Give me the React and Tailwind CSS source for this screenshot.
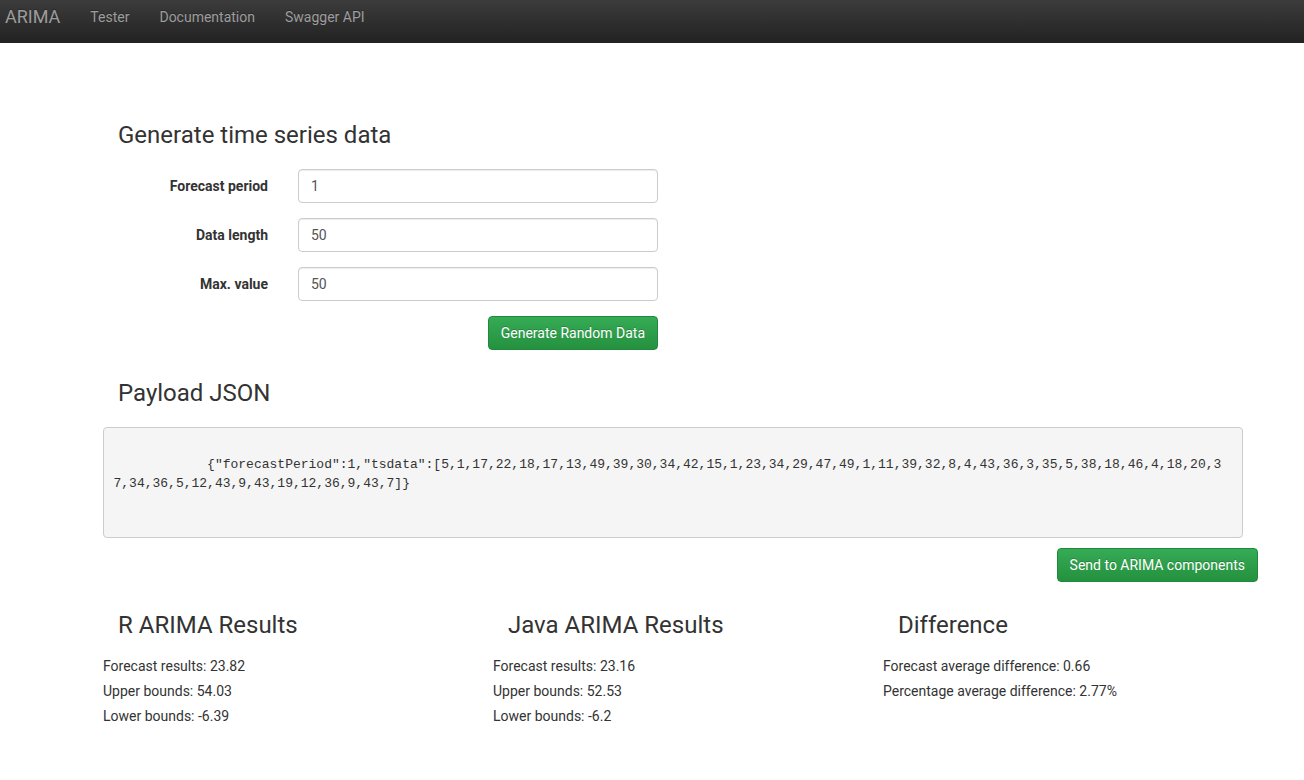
import React from "react";

const payloadLine1 =
  '{"forecastPeriod":1,"tsdata":[5,1,17,22,18,17,13,49,39,30,34,42,15,1,23,34,29,47,49,1,11,39,32,8,4,43,36,3,35,5,38,18,46,4,18,20,3';
const payloadLine2 = "7,34,36,5,12,43,9,43,19,12,36,9,43,7]}";

const fields = [
  { label: "Forecast period", value: "1" },
  { label: "Data length", value: "50" },
  { label: "Max. value", value: "50" },
];

const results = [
  {
    title: "R ARIMA Results",
    lines: ["Forecast results: 23.82", "Upper bounds: 54.03", "Lower bounds: -6.39"],
  },
  {
    title: "Java ARIMA Results",
    lines: ["Forecast results: 23.16", "Upper bounds: 52.53", "Lower bounds: -6.2"],
  },
  {
    title: "Difference",
    lines: ["Forecast average difference: 0.66", "Percentage average difference: 2.77%"],
  },
];

function Heading({ children }) {
  return (
    <h3 className="pl-[15px] text-[24px] leading-[26.4px] font-normal text-[#333]">{children}</h3>
  );
}

function GreenButton({ children }) {
  return (
    <button className="h-[34px] px-[12px] rounded-[4px] border border-[#1f8a3c] bg-gradient-to-b from-[#36ab55] to-[#24913f] text-white text-[14px] leading-[20px] [text-shadow:0_-1px_0_rgba(0,0,0,0.2)]">
      {children}
    </button>
  );
}

export default function App() {
  return (
    <div className="min-h-screen bg-white text-[#333] text-[14px] font-['Roboto',_'Liberation_Sans',_sans-serif]">
      {/* navbar */}
      <nav className="h-[43px] bg-gradient-to-b from-[#3c3c3c] to-[#222] flex items-start pt-[7px] text-[#9d9d9d] [text-shadow:0_-1px_0_rgba(0,0,0,0.25)]">
        <span className="pl-[5px] pr-[15px] text-[18px] leading-[20px]">ARIMA</span>
        <span className="px-[15px] leading-[20px]">Tester</span>
        <span className="px-[15px] leading-[20px]">Documentation</span>
        <span className="px-[15px] leading-[20px]">Swagger API</span>
      </nav>

      <div className="ml-[88px] w-[1170px] px-[15px] pt-[79px]">
        <Heading>Generate time series data</Heading>

        <div className="mt-[20.6px] flex flex-col gap-[15px]">
          {fields.map((f) => (
            <div key={f.label} className="flex items-center">
              <label className="w-[165px] text-right font-bold">{f.label}</label>
              <input
                className="ml-[30px] w-[360px] h-[34px] px-[12px] border border-[#ccc] rounded-[4px] text-[#555] text-[14px] shadow-[inset_0_1px_1px_rgba(0,0,0,0.075)] outline-none"
                defaultValue={f.value}
              />
            </div>
          ))}
          <div className="w-[555px] flex justify-end">
            <GreenButton>Generate Random Data</GreenButton>
          </div>
        </div>

        <div className="mt-[30px]">
          <Heading>Payload JSON</Heading>
        </div>

        <pre className="mt-[20.6px] h-[111px] p-[9.5px] bg-[#f5f5f5] border border-[#ccc] rounded-[4px] text-[13px] leading-[18.57px] text-[#333] whitespace-pre overflow-hidden font-['Liberation_Mono',_monospace]">
          {"\n            " + payloadLine1 + "\n" + payloadLine2}
        </pre>

        <div className="mt-[10px] -mr-[15px] flex justify-end">
          <GreenButton>Send to ARIMA components</GreenButton>
        </div>

        {/* results */}
        <div className="mt-[30px] w-[1170px] grid grid-cols-3">
          {results.map((r) => (
            <div key={r.title}>
              <Heading>{r.title}</Heading>
              <div className="mt-[16px] leading-[25px]">
                {r.lines.map((l) => (
                  <div key={l}>{l}</div>
                ))}
              </div>
            </div>
          ))}
        </div>
      </div>
    </div>
  );
}
